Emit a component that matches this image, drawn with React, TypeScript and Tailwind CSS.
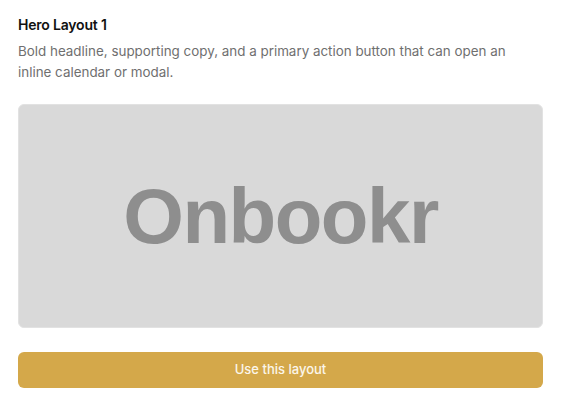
import React from 'react';

const App: React.FC = () => (
  <div className="min-h-screen bg-white px-[18px] pt-[15px] pb-4" style={{ fontFamily: 'Inter, "Noto Sans", sans-serif' }}>
    <h3 className="text-[14px] font-semibold leading-[20px] text-[#111] tracking-[-0.2px]">Hero Layout 1</h3>
    <p className="mt-[6px] max-w-[490px] text-[13.4px] leading-[21px] text-[#6f6f6f]">
      Bold headline, supporting copy, and a primary action button that can open an inline calendar or modal.
    </p>
    <div className="mt-[21px] flex h-[224px] items-center justify-center rounded-md border border-[#e2e2e2] bg-[#d9d9d9]">
      <span
        className="text-[78px] font-bold leading-none text-[#8e8e8e] tracking-[-1.5px]"
        style={{ fontFamily: '"Liberation Sans", Arial, sans-serif' }}
      >
        Onbookr
      </span>
    </div>
    <button className="mt-[24px] flex h-[36px] w-full items-center justify-center rounded-md bg-[#d4a84a] text-[13px] font-medium text-[#fbf6ea]">
      Use this layout
    </button>
  </div>
);

export default App;
